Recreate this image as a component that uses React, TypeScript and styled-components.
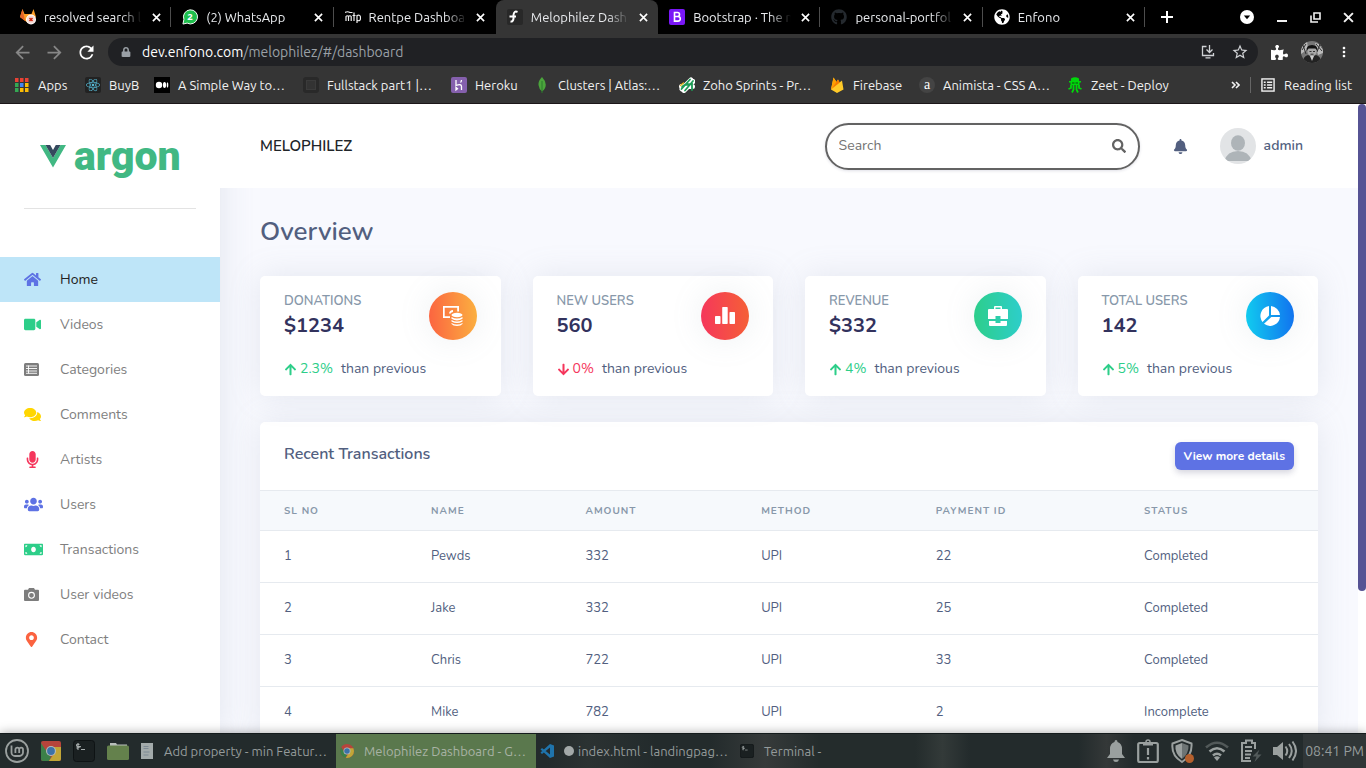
import React from 'react';
import styled, { createGlobalStyle } from 'styled-components';
import {
  FaHome, FaVideo, FaComments, FaMicrophone, FaUsers, FaMoneyBill, FaMapMarkerAlt,
  FaBell, FaSearch, FaArrowUp, FaArrowDown, FaReact, FaGithub, FaPuzzlePiece, FaLock, FaGlobeAmericas,
} from 'react-icons/fa';
import { MdOutlineStarBorder, MdRefresh, MdArrowBack, MdArrowForward, MdMoreVert } from 'react-icons/md';

const GlobalStyle = createGlobalStyle`
  *, *::before, *::after { box-sizing: border-box; }
  html, body, #root { height: 100%; }
  body { margin: 0; overflow: hidden; background: #000; }
  button { font: inherit; color: inherit; border: 0; padding: 0; background: none; cursor: pointer; }
  a { color: inherit; text-decoration: none; }
  svg { display: block; flex: none; }
`;

const chromeFont = `"Ubuntu", "Noto Sans", sans-serif`;
const pageFont = `"Nunito", "Lato", sans-serif`;

const Desktop = styled.div`
  display: flex;
  flex-direction: column;
  height: 100%;
`;

/* ---------- browser window ---------- */

const TabStrip = styled.div`
  display: flex;
  align-items: center;
  height: 34px;
  padding: 0 12px 0 9px;
  background: #000;
  color: #e8eaed;
  font: 13px/18px ${chromeFont};
`;

const Tabs = styled.div`
  display: grid;
  grid-template-columns: repeat(7, minmax(0, 1fr));
  flex: 0 1 1136px;
  height: 34px;
`;

const Tab = styled.div<{ $active?: boolean; $divider?: boolean }>`
  position: relative;
  display: flex;
  align-items: center;
  gap: 8px;
  padding: 0 9px 0 11px;
  border-radius: 8px 8px 0 0;
  background: ${p => (p.$active ? '#353535' : 'transparent')};
  &::after {
    content: '';
    position: absolute;
    right: 0;
    top: 7px;
    width: 1px;
    height: 20px;
    background: ${p => (p.$divider ? '#4d4d4d' : 'transparent')};
  }
`;

const TabTitle = styled.span`
  flex: 1;
  min-width: 0;
  overflow: hidden;
  white-space: nowrap;
  mask-image: linear-gradient(90deg, #000 78%, transparent);
`;

const TabClose = styled.button`
  display: grid;
  place-items: center;
  width: 12px;
  height: 16px;
  color: #fff;
`;

const NewTab = styled.button`
  margin-left: 15px;
  color: #fff;
`;

const WindowControls = styled.div`
  display: flex;
  align-items: center;
  gap: 22px;
  margin-left: auto;
  color: #f1f1f1;
`;

const Toolbar = styled.div`
  display: flex;
  align-items: center;
  height: 37px;
  padding: 0 14px 1px 12px;
  background: #353535;
  color: #fff;
`;

const NavButton = styled.button<{ $dim?: boolean }>`
  margin-right: 11px;
  color: ${p => (p.$dim ? '#878787' : '#fff')};
`;

const Omnibox = styled.div`
  display: flex;
  align-items: center;
  flex: 1;
  height: 28px;
  padding: 0 9px 0 13px;
  border-radius: 14px;
  background: #202124;
  color: #9aa0a6;
`;

const Address = styled.div`
  flex: 1;
  margin-left: 11px;
  font: 14px/20px ${chromeFont};
  b { font-weight: 400; color: #fff; }
`;

const OmniActions = styled.div`
  display: flex;
  align-items: center;
  gap: 16px;
  color: #d0d2d5;
`;

const ToolbarEnd = styled.div`
  display: flex;
  align-items: center;
  gap: 13px;
  margin-left: 13px;
`;

const BookmarkBar = styled.nav`
  display: flex;
  align-items: center;
  height: 33px;
  padding: 0 14px 4px;
  border-bottom: 1px solid #1c1719;
  background: #353535;
  color: #f1f1f1;
  font: 13px/18px ${chromeFont};
`;

const Bookmark = styled.a<{ $w: number }>`
  display: flex;
  align-items: center;
  gap: 8px;
  margin-right: 16px;
  white-space: nowrap;
  > span { width: ${p => p.$w}px; }
`;

const BookmarkEnd = styled.div`
  display: flex;
  align-items: center;
  gap: 10px;
  margin-left: auto;
`;

const ReadingList = styled.button`
  display: flex;
  align-items: center;
  gap: 9px;
`;

const Divider = styled.i`
  width: 1px;
  height: 16px;
  background: #666;
`;

/* ---------- dashboard ---------- */

const Viewport = styled.div`
  display: flex;
  flex: 1;
  min-height: 0;
  overflow: hidden;
  background: #f8f9fe;
  color: #525f7f;
  font-family: ${pageFont};
`;

const Sidebar = styled.aside`
  position: relative;
  z-index: 1;
  flex: 0 0 220px;
  background: #fff;
  box-shadow: 0 0 32px rgba(136, 152, 170, 0.2);
`;

const Brand = styled.a`
  display: flex;
  align-items: center;
  gap: 8px;
  height: 104px;
  padding-left: 40px;
  color: #41b883;
  font: 900 41px/48px "Roboto", sans-serif;
`;

const Rule = styled.hr`
  height: 1px;
  margin: 0 24px 48px;
  border: 0;
  background: #e3e3e3;
`;

const MenuLink = styled.a<{ $active?: boolean }>`
  display: flex;
  align-items: center;
  height: 45px;
  padding-left: 24px;
  background: ${p => (p.$active ? '#bee5f8' : 'transparent')};
  color: ${p => (p.$active ? '#222' : '#7f7f7f')};
  font-size: 14px;
  line-height: 20px;
`;

const MenuIcon = styled.span<{ $color: string }>`
  width: 36px;
  color: ${p => p.$color};
`;

const Main = styled.main`
  flex: 1;
  min-width: 0;
`;

const Header = styled.header`
  position: relative;
  z-index: 2;
  display: flex;
  align-items: center;
  height: 84px;
  padding: 0 55px 0 40px;
  background: #fff;
`;

const SiteName = styled.h1`
  flex: 1;
  margin: 0;
  color: #212529;
  font-size: 15px;
  line-height: 24px;
  font-weight: 600;
`;

const SearchBox = styled.form`
  display: flex;
  align-items: center;
  width: 315px;
  height: 47px;
  padding: 0 12px;
  border: 2px solid #636363;
  border-radius: 24px;
  color: #636363;
  box-shadow: 0 1px 3px rgba(50, 50, 93, 0.15);
  input {
    flex: 1;
    min-width: 0;
    padding: 0;
    border: 0;
    outline: 0;
    background: none;
    color: #636363;
    font: 14px/20px ${pageFont};
  }
  input::placeholder { color: #737373; }
`;

const Notifications = styled.button`
  margin: 0 32px 0 33px;
  color: #525f7f;
`;

const Profile = styled.a`
  display: flex;
  align-items: center;
  gap: 8px;
  color: #525f7f;
  font-size: 14px;
  line-height: 20px;
  font-weight: 600;
`;

const Content = styled.div`
  padding: 25px 40px;
`;

const Title = styled.h2`
  margin: 0 0 25px;
  font-size: 26px;
  line-height: 38px;
  font-weight: 600;
`;

const Stats = styled.section`
  display: grid;
  grid-template-columns: repeat(4, minmax(0, 1fr));
  gap: 32px;
  margin-bottom: 26px;
`;

const Card = styled.article`
  border-radius: 5px;
  background: #fff;
  box-shadow: 0 0 32px rgba(136, 152, 170, 0.18);
`;

const StatCard = styled(Card)`
  padding: 15px 24px;
`;

const StatTop = styled.div`
  display: flex;
  justify-content: space-between;
`;

const StatLabel = styled.h3`
  margin: 0;
  color: #8898aa;
  font-size: 13px;
  line-height: 20px;
  font-weight: 600;
`;

const StatValue = styled.p`
  margin: 0 0 16px;
  color: #32325d;
  font-size: 20px;
  line-height: 30px;
  font-weight: 700;
`;

const Disc = styled.span<{ $from: string; $to: string }>`
  display: grid;
  place-items: center;
  width: 48px;
  height: 48px;
  margin-top: 1px;
  border-radius: 50%;
  background: linear-gradient(87deg, ${p => p.$from}, ${p => p.$to});
  box-shadow: 0 0 32px rgba(136, 152, 170, 0.15);
`;

const Trend = styled.p<{ $down?: boolean }>`
  display: flex;
  align-items: center;
  gap: 3px;
  margin: 0;
  font-size: 14px;
  line-height: 24px;
  white-space: nowrap;
  b { font-weight: 400; margin-right: 5px; }
  svg, b { color: ${p => (p.$down ? '#f5365c' : '#2dce89')}; }
`;

const PanelHead = styled.div`
  display: flex;
  align-items: center;
  justify-content: space-between;
  height: 68px;
  padding: 0 24px;
  h3 {
    margin: 0 0 4px;
    font-size: 16px;
    line-height: 24px;
    font-weight: 600;
  }
`;

const PrimaryButton = styled.button`
  height: 28px;
  padding: 0 9px;
  border-radius: 6px;
  background: #5e72e4;
  color: #fff;
  font-size: 12px;
  line-height: 18px;
  font-weight: 700;
  box-shadow: 0 3px 6px rgba(50, 50, 93, 0.2);
`;

const Table = styled.table`
  width: 100%;
  border-collapse: collapse;
  table-layout: fixed;
  text-align: left;
  th, td { padding: 0 0 0 24px; border-top: 1px solid #e6eaef; }
  th {
    height: 40px;
    background: #f6f9fc;
    color: #8898aa;
    font-size: 10px;
    line-height: 16px;
    letter-spacing: 1px;
  }
  td {
    height: 52px;
    padding-bottom: 2px;
    font-size: 13px;
    line-height: 20px;
  }
`;

const ScrollTrack = styled.div`
  flex: 0 0 8px;
  background: #fff;
`;

const ScrollThumb = styled.div`
  height: 77.5%;
  border-radius: 4px;
  background: #565394;
`;

/* ---------- desktop panel ---------- */

const Taskbar = styled.footer`
  position: relative;
  z-index: 3;
  display: flex;
  align-items: center;
  height: 35px;
  padding-left: 5px;
  border-top: 1px solid #141b1c;
  background: linear-gradient(90deg, #232b2c 0 40%, #2b3232 43%, #232b2c 48% 52%, #363a3a 56%, #242c2c 60% 67%, #333a39 69%, #232b2c 71% 79%, #343838 81%, #232b2c 83%);
  color: #959b9b;
  font: 13px/18px ${chromeFont};
  box-shadow: 0 0 10px rgba(0, 0, 0, 0.35);
`;

const Launchers = styled.div`
  display: flex;
  align-items: center;
  gap: 12px;
  margin-right: 7px;
`;

const Task = styled.button<{ $active?: boolean }>`
  display: flex;
  align-items: center;
  gap: 10px;
  flex: 0 1 200px;
  min-width: 0;
  height: 34px;
  padding: 0 4px;
  background: ${p => (p.$active ? '#5a784d' : 'transparent')};
  color: ${p => (p.$active ? '#a9b3a5' : '#959b9b')};
  white-space: nowrap;
`;

const UnsavedDot = styled.i`
  width: 10px;
  height: 10px;
  margin-right: -6px;
  border-radius: 50%;
  background: #a3a9a9;
`;

const Tray = styled.div`
  display: flex;
  align-items: center;
  gap: 11px;
  margin-left: auto;
`;

const Clock = styled.time`
  display: flex;
  align-items: center;
  height: 34px;
  padding: 0 2px;
  margin-left: -5px;
  background: #303637;
  font-size: 14px;
`;

/* ---------- drawings ---------- */

const Cross = ({ size = 10 }: { size?: number }) => (
  <svg width={size} height={size} viewBox="0 0 10 10" stroke="currentColor" strokeWidth="1.8">
    <path d="M1 1l8 8M9 1L1 9" />
  </svg>
);

const GitlabIcon = () => (
  <svg width="16" height="16" viewBox="0 0 16 16">
    <path d="M2.500 0L0 8l8 6 8-6-2.500-8-2 5h-7z" fill="#fc9d26" />
    <path d="M2.500 0L0 8l5 4z" fill="#e2632a" />
    <circle cx="11" cy="10.500" r="5" fill="#fff" />
    <circle cx="11" cy="10.500" r="4" fill="#f4dbd7" />
    <path d="M9.500 9l3 3m0-3l-3 3" stroke="#d3250c" strokeWidth="1.500" />
  </svg>
);

const WhatsappIcon = () => (
  <svg width="16" height="16" viewBox="0 0 17 17">
    <path d="M1 16l1-5A7.500 7.500 0 1 1 5.500 15z" fill="#1fc04d" stroke="#fff" strokeWidth="1" />
    <text x="8.500" y="12" fontSize="10" fontWeight="700" fill="#fff" textAnchor="middle" fontFamily="Noto Sans">2</text>
  </svg>
);

const RentpeIcon = () => (
  <svg width="16" height="16" viewBox="0 0 16 16" fill="none" stroke="#f1f1f1" strokeWidth="1.200">
    <path d="M0 3.500q2.500-1.500 5 0h2.500M1 12V7.500q1.200-1.500 2.500 0v4.500M3.500 7.500Q5 6 6.200 7.500v4.500M9 3.500V12M7.500 6.500h3M12 14V6.500q3.500-1.500 3.500 2.500t-3.500 2.200" />
  </svg>
);

const EnfonoF = () => (
  <svg width="16" height="16" viewBox="0 0 16 16">
    <rect width="16" height="16" rx="2" fill="#282828" />
    <path d="M10.500 3Q7 1.500 6.500 6v3.500Q6 13 3.500 12.500M2.500 7.500H9" fill="none" stroke="#fff" strokeWidth="2" />
  </svg>
);

const BootstrapIcon = () => (
  <svg width="16" height="16" viewBox="0 0 16 16">
    <rect width="16" height="16" rx="2" fill="#7a17f7" />
    <path d="M5.500 3.500h3a2 2 0 0 1 0 4h-3zm0 4h3.500a2.300 2.300 0 0 1 0 4.600H5.500z" fill="none" stroke="#fff" strokeWidth="1.600" />
  </svg>
);

const AppsIcon = () => (
  <svg width="16" height="16" viewBox="0 0 16 16">
    {['#e94235', '#e94235', '#e94235', '#34a853', '#4285f4', '#fbbc05', '#34a853', '#fbbc05', '#fbbc05'].map((c, i) => (
      <rect key={i} x={1 + (i % 3) * 5} y={1 + Math.floor(i / 3) * 5} width="3.500" height="4" fill={c} />
    ))}
  </svg>
);

const ReactTile = styled.div`
  display: grid;
  place-items: center;
  width: 16px;
  height: 16px;
  border-radius: 2px;
  background: #222;
  color: #56b8d4;
`;

const MediumIcon = () => (
  <svg width="16" height="16" viewBox="0 0 16 16" fill="#fff">
    <rect width="16" height="16" fill="#000" />
    <circle cx="5" cy="8" r="3.200" /><ellipse cx="10.500" cy="8" rx="1.600" ry="3" /><ellipse cx="13.500" cy="8" rx="0.800" ry="2.800" />
  </svg>
);

const BlankTile = () => (
  <svg width="16" height="16" viewBox="0 0 16 16">
    <rect width="16" height="16" rx="3" fill="#292929" />
    <rect x="3.500" y="3.500" width="9" height="9" fill="#333" stroke="#3b3b3b" />
  </svg>
);

const HerokuIcon = () => (
  <svg width="16" height="16" viewBox="0 0 16 16">
    <rect width="16" height="16" rx="2" fill="#8560ad" />
    <path d="M5 3v5.500q5.500-2 5.500 1V13M10.500 3q0 1.500-1 2.500M5 10.500V13l1.500-1.200z" fill="none" stroke="#fff" strokeWidth="1.300" />
  </svg>
);

const LeafIcon = () => (
  <svg width="16" height="16" viewBox="0 0 16 16">
    <path d="M8 0Q4 4 4.500 8T8 14.500Q12 11.500 11.700 7.500T8 0z" fill="#4ba53c" />
    <path d="M8 4v12" stroke="#2c7a2c" />
  </svg>
);

const ZohoIcon = () => (
  <svg width="16" height="16" viewBox="0 0 16 16" strokeLinecap="round" fill="none">
    <path d="M3 12L12 3M5 13.500L14 4.500M2.500 9.500h11" stroke="#fff" strokeWidth="5" />
    <path d="M2.500 12L11 2.500M6 13.500L14 4M3 10q2-3 10-3v6" stroke="#1d9a55" strokeWidth="1.800" />
    <path d="M1.500 8.500l3-2.500" stroke="#e8b422" strokeWidth="1.500" />
  </svg>
);

const FirebaseIcon = () => (
  <svg width="16" height="16" viewBox="0 0 16 16">
    <path d="M2 12.500L4.500 0.500l3 4.500L9 2.500l1.500 3L13 3.500l1.500 9L8 16z" fill="#ffca28" />
    <path d="M2 12.500L4.500 0.500l3 4.500z" fill="#ffa000" />
    <path d="M2 12.500L9 2.500l1.800 3z" fill="#f57c00" />
  </svg>
);

const AnimistaIcon = () => (
  <svg width="16" height="16" viewBox="0 0 16 16">
    <circle cx="8" cy="8" r="8" fill="#444" />
    <text x="8" y="12" textAnchor="middle" fontSize="14" fill="#fff" fontFamily="Liberation Serif">a</text>
  </svg>
);

const ZeetIcon = () => (
  <svg width="16" height="16" viewBox="0 0 16 16" fill="#00d60a">
    <path d="M4 1.500Q8-1 12 1.500V4h2v1.500h-1.500V8H3.500V5.500H2V4h2z" />
    <path d="M4 8v3l-2.500 1M6.500 8v4.500L5 15.500M9.500 8v4.500l1.500 3M12 8v3l2.500 1" fill="none" stroke="#00d60a" strokeWidth="1.800" />
    <path d="M5 5.500h2.500v1H5zM8.500 5.500H11v1H8.500z" fill="#0a4a10" />
  </svg>
);

const ReadingListIcon = () => (
  <svg width="14" height="14" viewBox="0 0 15 15" fill="none" stroke="#f1f1f1" strokeWidth="1.500">
    <rect x="1" y="1" width="13" height="13" />
    <path d="M3 4.500h2M3 7.500h2M3 10.500h2M6.500 4.500H12M6.500 7.500H12M6.500 10.500H12" />
  </svg>
);

const InstallIcon = () => (
  <svg width="14" height="14" viewBox="0 0 14 14" fill="none" stroke="currentColor" strokeWidth="1.300">
    <path d="M5.500 1.500H1.500v9h11V8M4.500 12.800h5M8.500 0v6.500M5.500 4.500l3 3 3-3" />
  </svg>
);

const UserPhoto = () => (
  <svg width="22" height="22" viewBox="0 0 22 22">
    <defs><clipPath id="photo"><circle cx="11" cy="11" r="11" /></clipPath></defs>
    <g clipPath="url(#photo)">
      <rect width="22" height="22" fill="#777" />
      <path d="M0 0h6l1 8-7 5zM14 2l8 2v8l-5 2z" fill="#bbb" />
      <path d="M15 3l6 7M17 1l5 7M19 3l-3 8M2 4l3 9M1 9l4-6" stroke="#333" />
      <path d="M2 22q0-7 5-8l4 2 4-2q5 1 5 8z" fill="#222" />
      <circle cx="11" cy="10.500" r="4.600" fill="#a8a8a8" />
      <path d="M5.500 10Q5 4 11 4t5.500 6l-2-2.500h-7z" fill="#111" />
      <path d="M8.500 10.500h2M12 10.500h2M9.500 13.200h3" stroke="#333" />
      <path d="M9 15l2 5 2-5z" fill="#ccc" />
    </g>
  </svg>
);

const VueMark = () => (
  <svg width="26" height="23" viewBox="0 0 26 23">
    <path d="M0 0h5.500L13 13 20.500 0H26L13 22.500z" fill="#41b883" />
    <path d="M5.500 0h4.700L13 5l2.800-5h4.700L13 13z" fill="#35495e" />
  </svg>
);

const ListIcon = () => (
  <svg width="15" height="13" viewBox="0 0 15 13">
    <rect width="15" height="13" rx="1.500" fill="currentColor" />
    <path d="M2 3h11M2 5.500h11M2 8h11M2 10.300h11M4.500 2.500v8" stroke="#fff" strokeWidth="0.900" />
  </svg>
);

const CameraIcon = () => (
  <svg width="15" height="13" viewBox="0 0 15 13">
    <path d="M1 1.800h3L5 0h5l1 1.800h3a1 1 0 0 1 1 1V12a1 1 0 0 1-1 1H1a1 1 0 0 1-1-1V2.800a1 1 0 0 1 1-1z" fill="currentColor" />
    <circle cx="7.500" cy="7.300" r="2.900" fill="none" stroke="#fff" strokeWidth="1.100" />
  </svg>
);

const AvatarIcon = () => (
  <svg width="36" height="36" viewBox="0 0 36 36">
    <defs><clipPath id="avatar"><circle cx="18" cy="18" r="18" /></clipPath></defs>
    <g clipPath="url(#avatar)">
      <rect width="36" height="36" fill="#e2e4e6" />
      <ellipse cx="18" cy="15" rx="7" ry="7.700" fill="#aeb4b8" />
      <path d="M4.500 33Q7 23 18 23t13.500 10z" fill="#aeb4b8" />
    </g>
  </svg>
);

const CoinsIcon = () => (
  <svg width="20" height="20" viewBox="0 0 20 20" fill="#fff">
    <path d="M0 0h16v5.500h-1.800V1.700H1.700v8.600H7V12H0z" />
    <path d="M6 7.500Q6.500 4 10 4v2Q8 6.300 7.800 7.500z" />
    <ellipse cx="14" cy="9" rx="5.500" ry="2.200" />
    <path d="M8.500 11q5.500 3.200 11 0v1.800q-5.500 3.200-11 0zM8.500 14q5.500 3.200 11 0v1.500q-5.500 3.200-11 0zM8.500 17q5.500 3 11 0v1q-1.500 2-5.500 2t-5.500-2z" />
  </svg>
);

const BarsIcon = () => (
  <svg width="20" height="18" viewBox="0 0 20 18" fill="#fff">
    <rect x="0" y="9" width="5.500" height="8" rx="0.700" /><rect x="7.200" y="0" width="5.500" height="17" rx="0.700" /><rect x="14.500" y="5" width="5.500" height="12" rx="0.700" />
  </svg>
);

const BriefcaseIcon = () => (
  <svg width="20" height="20" viewBox="0 0 20 20" fill="#fff">
    <path d="M1 3h5V1q0-1 1-1h6q1 0 1 1v2h5q1 0 1 1v9h-7.500v-3h-5v3H0V4q0-1 1-1zm6.500-1.500V3h5V1.500z" fillRule="evenodd" />
    <path d="M1 15h6.500v2h5v-2H19v4q0 1-1 1H2q-1 0-1-1z" />
  </svg>
);

const PieIcon = () => (
  <svg width="20" height="20" viewBox="0 0 20 20" fill="#fff">
    <path d="M9 0v9.600L2.500 16A10 10 0 0 1 9 0zM11 0a10 10 0 0 1 9 9h-9zM11.300 11H20A10 10 0 0 1 4 17.800z" />
  </svg>
);

const MintIcon = () => (
  <svg width="24" height="24" viewBox="0 0 24 24" fill="none" stroke="#9aa09f" strokeWidth="1.800">
    <circle cx="12" cy="12" r="11" />
    <path d="M6.500 6.500v7a3.500 3.500 0 0 0 3.500 3.500h4.500a3.500 3.500 0 0 0 3.500-3.500V10.500a1.900 1.900 0 0 0-3.800 0V14M14.200 10.500a1.900 1.900 0 0 0-3.800 0V14" />
  </svg>
);

const ChromeIcon = ({ size, square }: { size: number; square?: boolean }) => (
  <svg width={size} height={size} viewBox="0 0 20 20">
    <defs><clipPath id={`chrome${size}`}>{square ? <rect width="20" height="20" rx="2" /> : <circle cx="10" cy="10" r="10" />}</clipPath></defs>
    <g clipPath={`url(#chrome${size})`}>
      <rect width="20" height="20" fill="#b7443b" />
      <path d="M0 2l6 9 4 5-2 4H0z" fill="#3c8048" />
      <path d="M12 6h8v14H8l6-9z" fill="#c2a637" />
    </g>
    <circle cx="10" cy="10" r="5" fill="#b5bcbc" /><circle cx="10" cy="10" r="3.900" fill="#3c72a8" />
  </svg>
);

const TerminalIcon = ({ size }: { size: number }) => (
  <svg width={size} height={size} viewBox="0 0 22 22">
    <rect x="0.500" y="0.500" width="21" height="21" rx="3" fill="#1a2021" stroke="#0e1314" />
    <path d="M6.500 4.500q-3-1-3 .7t3 1.400-3 1.500M5 3v7M8 9.500h4" fill="none" stroke="#a5abab" strokeWidth="1.100" />
  </svg>
);

const FolderIcon = () => (
  <svg width="22" height="18" viewBox="0 0 22 18">
    <path d="M3 3V1h6l1 1.500h10V6H3z" fill="#b9bfbb" />
    <rect y="3.500" width="22" height="14.500" rx="1.500" fill="#64814c" />
  </svg>
);

const DocIcon = () => (
  <svg width="14" height="16" viewBox="0 0 14 16">
    <rect x="1" width="12" height="16" fill="#a3abab" />
    <path d="M3.500 3.500h5M3.500 5.500h5M3.500 9h6M3.500 12h5" stroke="#7d8a94" />
  </svg>
);

const VsCodeIcon = () => (
  <svg width="14" height="14" viewBox="0 0 14 14">
    <path d="M10 0l4 1.500v11L10 14 0.500 5.500 2 4l8 6.500v-7L2 10 0.500 8.500z" fill="#1f74ac" />
  </svg>
);

const TrayBell = () => (
  <svg width="20" height="24" viewBox="0 0 20 24" fill="#9aa09f">
    <path d="M10 1q1.500 0 1.500 2Q16 4.500 16 10v5l3 4H1l3-4v-5q0-5.500 4.500-7Q8.500 1 10 1zM7 20.500h6Q12.500 23 10 23t-3-2.500z" />
  </svg>
);

const TrayClipboard = () => (
  <svg width="22" height="24" viewBox="0 0 22 24" fill="none" stroke="#9aa09f" strokeWidth="2.200">
    <rect x="1.200" y="4" width="19.600" height="19" rx="1.500" />
    <circle cx="11" cy="3" r="2" strokeWidth="1.500" />
    <path d="M6 5.500h10M11 9v7M11 18v2.500" />
  </svg>
);

const TrayShield = () => (
  <svg width="24" height="24" viewBox="0 0 24 24">
    <path d="M12 1l9.500 3.500q1 12-9.500 18.500Q1 16.500 2.500 4.500z" fill="none" stroke="#9aa09f" strokeWidth="2" />
    <path d="M12 4v16Q4.500 14.500 5.500 6.500z" fill="#9aa09f" /><path d="M12 4l6.500 2.500Q19 14.500 12 20z" fill="#6d7474" />
    <circle cx="19.500" cy="19.500" r="4.500" fill="#b5602d" />
  </svg>
);

const TrayWifi = () => (
  <svg width="24" height="20" viewBox="0 0 24 20" fill="none" strokeWidth="2.600">
    <path d="M1 6.500Q12-3 23 6.500" stroke="#525959" />
    <path d="M4.500 10.500Q12 4 19.500 10.500M8 14.500q4-3.500 8 0" stroke="#9aa09f" />
    <path d="M9 16.500q3-2.500 6 0L12 20z" fill="#9aa09f" />
  </svg>
);

const TrayBattery = () => (
  <svg width="22" height="24" viewBox="0 0 22 24" fill="none" stroke="#9aa09f" strokeWidth="2">
    <path d="M15 10V4h-3V1.500H6V4H2v18h9M5 8h7M5 12h7M5 15.500h6M5 19h5" />
    <path d="M19.500 10.500l-7 7h4l-2 5.500 7-7.500h-4z" fill="#525a5a" stroke="none" />
  </svg>
);

const TrayVolume = () => (
  <svg width="24" height="22" viewBox="0 0 24 22">
    <path d="M0 7h4l6-5v18l-6-5H0z" fill="#9aa09f" />
    <path d="M12.500 6.500q3.500 4.500 0 9M16 4q5.500 7 0 14M19.500 1.500q7 9.500 0 19" fill="none" stroke="#9aa09f" strokeWidth="2" />
  </svg>
);

/* ---------- data ---------- */

const tabs = [
  { title: 'resolved search l', icon: <GitlabIcon />, divider: true },
  { title: '(2) WhatsApp', icon: <WhatsappIcon />, divider: true },
  { title: 'Rentpe Dashboa', icon: <RentpeIcon /> },
  { title: 'Melophilez Dash', icon: <EnfonoF />, active: true },
  { title: 'Bootstrap · The n', icon: <BootstrapIcon />, divider: true },
  { title: 'personal-portfol', icon: <FaGithub size={16} color="#24292e" />, divider: true },
  { title: 'Enfono', icon: <FaGlobeAmericas size={16} color="#fff" />, divider: true },
];

const bookmarks = [
  { name: 'Apps', w: 31, icon: <AppsIcon /> },
  { name: 'BuyB', w: 29, icon: <ReactTile><FaReact size={14} /></ReactTile> },
  { name: 'A Simple Way to…', w: 109, icon: <MediumIcon /> },
  { name: 'Fullstack part1 |…', w: 108, icon: <BlankTile /> },
  { name: 'Heroku', w: 43, icon: <HerokuIcon /> },
  { name: 'Clusters | Atlas:…', w: 105, icon: <LeafIcon /> },
  { name: 'Zoho Sprints - Pr…', w: 110, icon: <ZohoIcon /> },
  { name: 'Firebase', w: 50, icon: <FirebaseIcon /> },
  { name: 'Animista - CSS A…', w: 108, icon: <AnimistaIcon /> },
  { name: 'Zeet - Deploy', w: 78, icon: <ZeetIcon /> },
];

const menu = [
  { name: 'Home', color: '#5e72e4', icon: <FaHome size={17} />, active: true },
  { name: 'Videos', color: '#2dce89', icon: <FaVideo size={17} /> },
  { name: 'Categories', color: '#7d7d7d', icon: <ListIcon /> },
  { name: 'Comments', color: '#ffd600', icon: <FaComments size={17} /> },
  { name: 'Artists', color: '#f5365c', icon: <FaMicrophone size={17} /> },
  { name: 'Users', color: '#5e72e4', icon: <FaUsers size={19} /> },
  { name: 'Transactions', color: '#2dce89', icon: <FaMoneyBill size={19} /> },
  { name: 'User videos', color: '#7d7d7d', icon: <CameraIcon /> },
  { name: 'Contact', color: '#fb6340', icon: <FaMapMarkerAlt size={15} /> },
];

const stats = [
  { label: 'DONATIONS', value: '$1234', change: '2.3%', from: '#fb6340', to: '#fbb140', icon: <CoinsIcon /> },
  { label: 'NEW USERS', value: '560', change: '0%', down: true, from: '#f5365c', to: '#f56036', icon: <BarsIcon /> },
  { label: 'REVENUE', value: '$332', change: '4%', from: '#2dce89', to: '#2dcecc', icon: <BriefcaseIcon /> },
  { label: 'TOTAL USERS', value: '142', change: '5%', from: '#11cdef', to: '#1171ef', icon: <PieIcon /> },
];

const columns = [
  { name: 'SL NO', width: '13.9%' },
  { name: 'NAME', width: '14.6%' },
  { name: 'AMOUNT', width: '16.6%' },
  { name: 'METHOD', width: '16.5%' },
  { name: 'PAYMENT ID', width: '19.7%' },
  { name: 'STATUS', width: '18.7%' },
];

const rows = [
  ['1', 'Pewds', '332', 'UPI', '22', 'Completed'],
  ['2', 'Jake', '332', 'UPI', '25', 'Completed'],
  ['3', 'Chris', '722', 'UPI', '33', 'Completed'],
  ['4', 'Mike', '782', 'UPI', '2', 'Incomplete'],
];

/* ---------- page ---------- */

export default function App() {
  return (
    <Desktop>
      <GlobalStyle />
      <TabStrip>
        <Tabs>
          {tabs.map(t => (
            <Tab key={t.title} $active={t.active} $divider={t.divider}>
              {t.icon}
              <TabTitle>{t.title}</TabTitle>
              <TabClose aria-label="Close tab"><Cross size={9} /></TabClose>
            </Tab>
          ))}
        </Tabs>
        <NewTab aria-label="New tab">
          <svg width="14" height="14" viewBox="0 0 14 14" stroke="currentColor" strokeWidth="2"><path d="M7 1v12M1 7h12" /></svg>
        </NewTab>
        <WindowControls>
          <button aria-label="Search tabs">
            <svg width="14" height="14" viewBox="0 0 14 14"><circle cx="7" cy="7" r="7" fill="#fff" /><path d="M3.800 5.500h6.400L7 9.300z" fill="#000" /></svg>
          </button>
          <button aria-label="Minimize">
            <svg width="12" height="12" viewBox="0 0 12 12" stroke="currentColor" strokeWidth="2"><path d="M1 10h10" /></svg>
          </button>
          <button aria-label="Restore">
            <svg width="11" height="11" viewBox="0 0 11 11" fill="none" stroke="currentColor" strokeWidth="1.600"><path d="M4 1h6v6H4zM1 3.500V10h7" /></svg>
          </button>
          <button aria-label="Close window"><Cross size={11} /></button>
        </WindowControls>
      </TabStrip>
      <Toolbar>
        <NavButton $dim aria-label="Back"><MdArrowBack size={21} /></NavButton>
        <NavButton $dim aria-label="Forward"><MdArrowForward size={21} /></NavButton>
        <NavButton aria-label="Reload"><MdRefresh size={21} /></NavButton>
        <Omnibox>
          <FaLock size={10} />
          <Address><b>dev.enfono.com</b>/melophilez/#/dashboard</Address>
          <OmniActions>
            <button aria-label="Install"><InstallIcon /></button>
            <button aria-label="Bookmark this page"><MdOutlineStarBorder size={18} /></button>
          </OmniActions>
        </Omnibox>
        <ToolbarEnd>
          <button aria-label="Extensions"><FaPuzzlePiece size={17} /></button>
          <button aria-label="Account"><UserPhoto /></button>
          <button aria-label="Menu"><MdMoreVert size={16} /></button>
        </ToolbarEnd>
      </Toolbar>
      <BookmarkBar>
        {bookmarks.map(b => (
          <Bookmark key={b.name} href="#" $w={b.w}>{b.icon}<span>{b.name}</span></Bookmark>
        ))}
        <BookmarkEnd>
          <button aria-label="More bookmarks">
            <svg width="9" height="8" viewBox="0 0 9 8" fill="none" stroke="currentColor" strokeWidth="1.600"><path d="M1 1l3 3-3 3M5 1l3 3-3 3" /></svg>
          </button>
          <Divider />
          <ReadingList><ReadingListIcon />Reading list</ReadingList>
        </BookmarkEnd>
      </BookmarkBar>

      <Viewport>
        <Sidebar>
          <Brand href="#"><VueMark />argon</Brand>
          <Rule />
          <nav>
            {menu.map(m => (
              <MenuLink key={m.name} href="#" $active={m.active}>
                <MenuIcon $color={m.color}>{m.icon}</MenuIcon>{m.name}
              </MenuLink>
            ))}
          </nav>
        </Sidebar>
        <Main>
          <Header>
            <SiteName>MELOPHILEZ</SiteName>
            <SearchBox>
              <input type="search" placeholder="Search" aria-label="Search" />
              <button type="submit" aria-label="Submit search"><FaSearch size={14} /></button>
            </SearchBox>
            <Notifications aria-label="Notifications"><FaBell size={15} /></Notifications>
            <Profile href="#"><AvatarIcon />admin</Profile>
          </Header>
          <Content>
            <Title>Overview</Title>
            <Stats>
              {stats.map(s => (
                <StatCard key={s.label}>
                  <StatTop>
                    <div>
                      <StatLabel>{s.label}</StatLabel>
                      <StatValue>{s.value}</StatValue>
                    </div>
                    <Disc $from={s.from} $to={s.to}>{s.icon}</Disc>
                  </StatTop>
                  <Trend $down={s.down}>
                    {s.down ? <FaArrowDown size={13} /> : <FaArrowUp size={13} />}
                    <b>{s.change}</b>
                    <span>than previous</span>
                  </Trend>
                </StatCard>
              ))}
            </Stats>
            <Card>
              <PanelHead>
                <h3>Recent Transactions</h3>
                <PrimaryButton>View more details</PrimaryButton>
              </PanelHead>
              <Table>
                <colgroup>{columns.map(c => <col key={c.name} width={c.width} />)}</colgroup>
                <thead><tr>{columns.map(c => <th key={c.name} scope="col">{c.name}</th>)}</tr></thead>
                <tbody>
                  {rows.map(r => <tr key={r[0]}>{r.map((v, i) => <td key={i}>{v}</td>)}</tr>)}
                </tbody>
              </Table>
            </Card>
          </Content>
        </Main>
        <ScrollTrack><ScrollThumb /></ScrollTrack>
      </Viewport>

      <Taskbar>
        <Launchers>
          <button aria-label="Menu"><MintIcon /></button>
          <button aria-label="Chrome"><ChromeIcon size={20} square /></button>
          <button aria-label="Terminal"><TerminalIcon size={22} /></button>
          <button aria-label="Files"><FolderIcon /></button>
        </Launchers>
        <Task><DocIcon /><span>Add property - min Featur…</span></Task>
        <Task $active><ChromeIcon size={14} /><span>Melophilez Dashboard - G…</span></Task>
        <Task><VsCodeIcon /><UnsavedDot /><span>index.html - landingpag…</span></Task>
        <Task><TerminalIcon size={14} /><span>Terminal -</span></Task>
        <Tray>
          <TrayBell /><TrayClipboard /><TrayShield /><TrayWifi /><TrayBattery /><TrayVolume />
          <Clock>08:41 PM</Clock>
        </Tray>
      </Taskbar>
    </Desktop>
  );
}
